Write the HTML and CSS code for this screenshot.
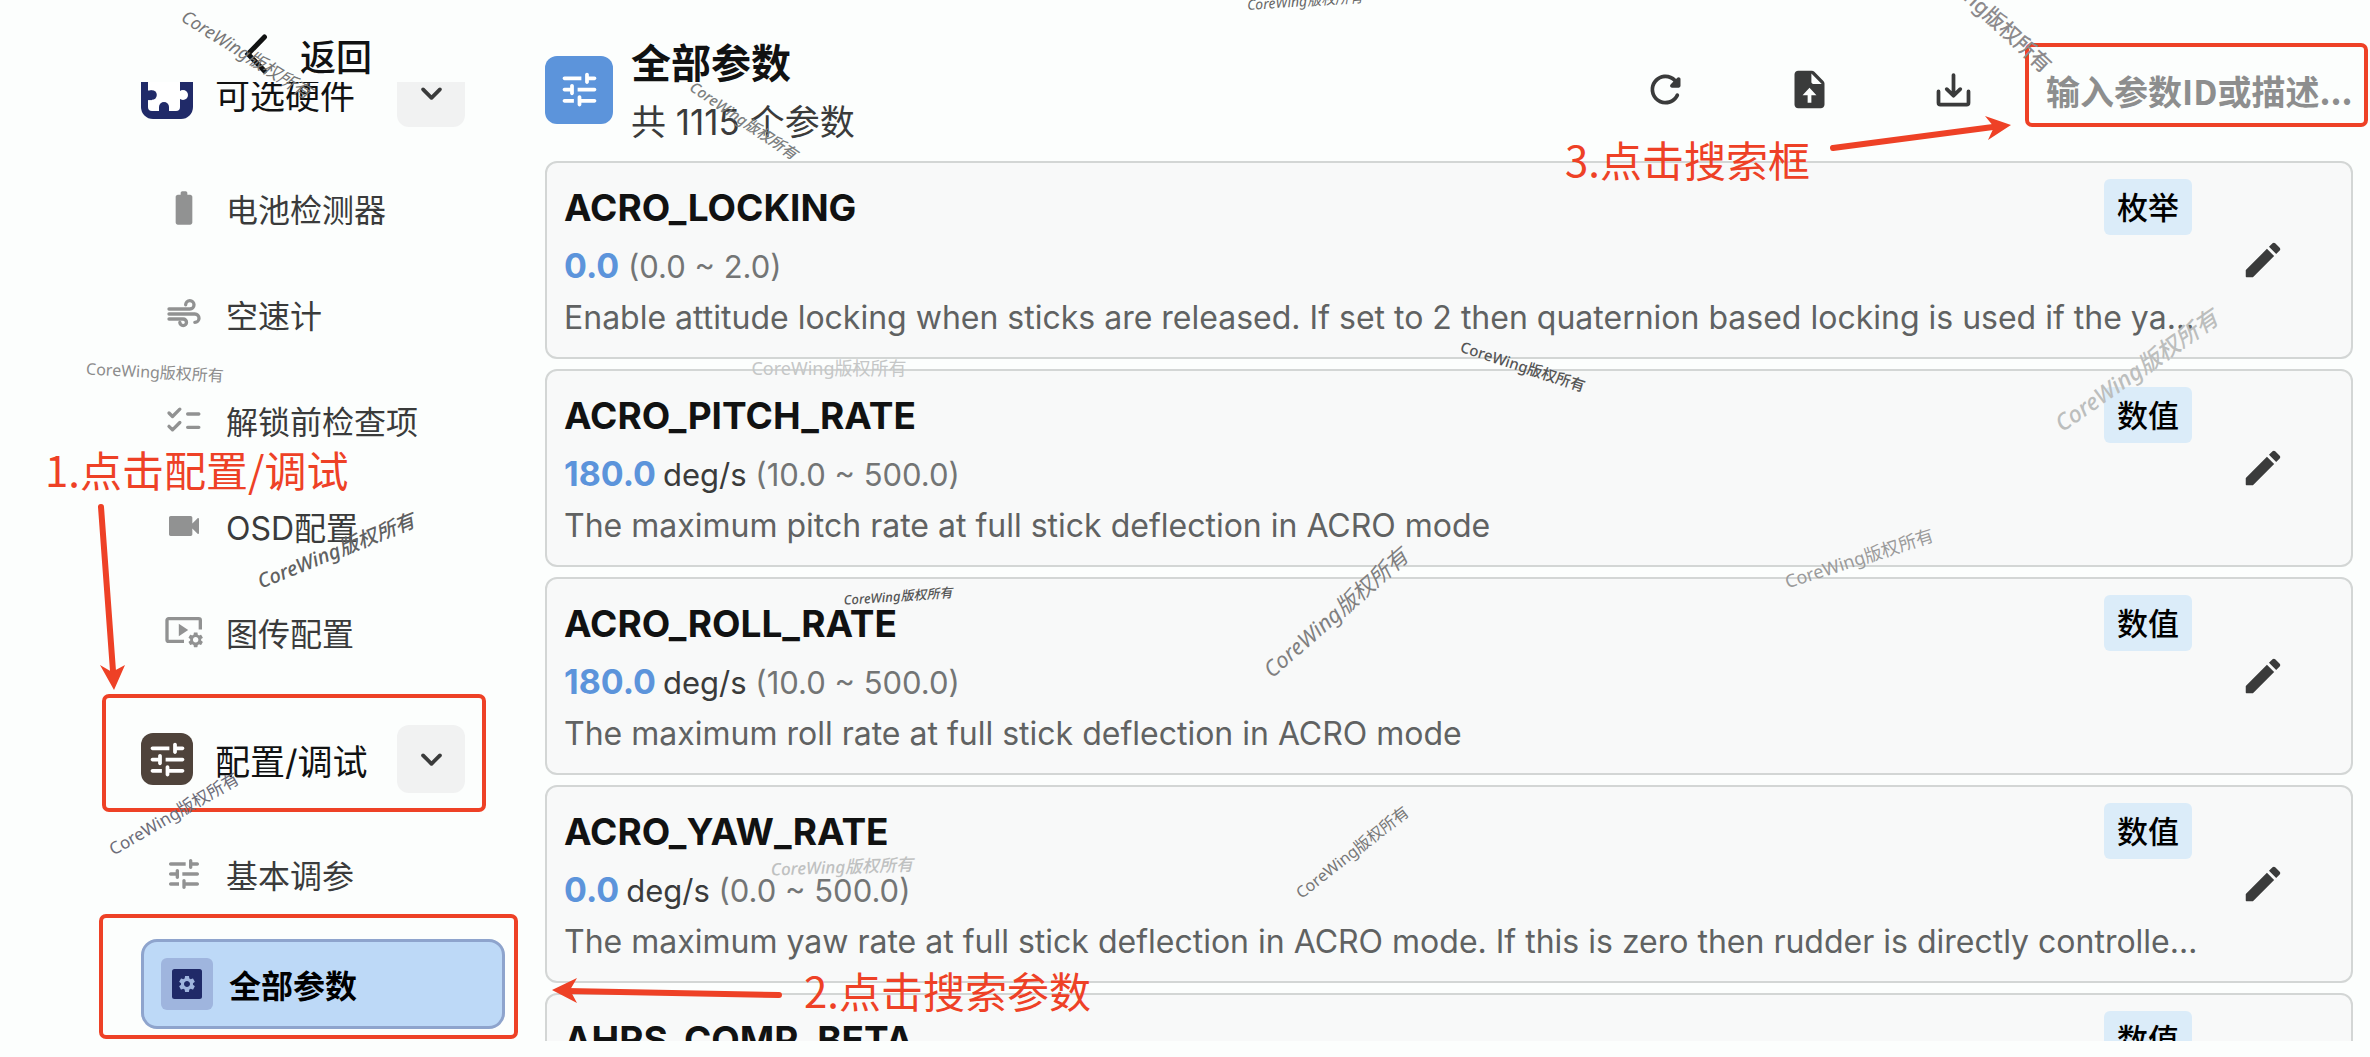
FILE: index.html
```html
<!DOCTYPE html>
<html lang="zh-CN">
<head>
<meta charset="utf-8">
<meta name="viewport" content="width=device-width, initial-scale=1">
<title>全部参数</title>
<link rel="stylesheet" href="styles.css">
</head>
<body>
<svg class="sprite" aria-hidden="true">
  <symbol id="i-tune" viewBox="0 0 24 24"><path d="M3 18c0 .55.45 1 1 1h5v-2H4c-.55 0-1 .45-1 1zM3 6c0 .55.45 1 1 1h9V5H4c-.55 0-1 .45-1 1zm10 14v-1h7c.55 0 1-.45 1-1s-.45-1-1-1h-7v-1c0-.55-.45-1-1-1s-1 .45-1 1v4c0 .55.45 1 1 1s1-.45 1-1zM7 10v1H4c-.55 0-1 .45-1 1s.45 1 1 1h3v1c0 .55.45 1 1 1s1-.45 1-1v-4c0-.55-.45-1-1-1s-1 .45-1 1zm14 2c0-.55-.45-1-1-1h-9v2h9c.55 0 1-.45 1-1zm-5-3c.55 0 1-.45 1-1V7h3c.55 0 1-.45 1-1s-.45-1-1-1h-3V4c0-.55-.45-1-1-1s-1 .45-1 1v4c0 .55.45 1 1 1z"/></symbol>
  <symbol id="i-gear" viewBox="0 0 24 24"><path d="M19.14 12.94c.04-.3.06-.61.06-.94 0-.32-.02-.64-.07-.94l2.03-1.58c.18-.14.23-.41.12-.61l-1.92-3.32c-.12-.22-.37-.29-.59-.22l-2.39.96c-.5-.38-1.03-.7-1.62-.94l-.36-2.54c-.04-.24-.24-.41-.48-.41h-3.84c-.24 0-.43.17-.47.41l-.36 2.54c-.59.24-1.13.57-1.62.94l-2.39-.96c-.22-.08-.47 0-.59.22L2.74 8.87c-.12.21-.08.47.12.61l2.03 1.58c-.05.3-.09.63-.09.94s.02.64.07.94l-2.03 1.58c-.18.14-.23.41-.12.61l1.92 3.32c.12.22.37.29.59.22l2.39-.96c.5.38 1.03.7 1.62.94l.36 2.54c.05.24.24.41.48.41h3.84c.24 0 .44-.17.47-.41l.36-2.54c.59-.24 1.13-.56 1.62-.94l2.39.96c.22.08.47 0 .59-.22l1.92-3.32c.12-.22.07-.47-.12-.61l-2.01-1.58zM12 15.6c-1.98 0-3.6-1.62-3.6-3.6s1.62-3.6 3.6-3.6 3.6 1.62 3.6 3.6-1.62 3.6-3.6 3.6z"/></symbol>
  <symbol id="i-edit" viewBox="0 0 24 24"><path d="M3 17.46v3.04c0 .28.22.5.5.5h3.04c.13 0 .26-.05.35-.15L17.81 9.94l-3.75-3.75L3.15 17.1c-.1.1-.15.22-.15.36zM20.71 7.04c.39-.39.39-1.02 0-1.41l-2.34-2.34c-.39-.39-1.02-.39-1.41 0l-1.83 1.83 3.75 3.75 1.83-1.83z"/></symbol>
  <symbol id="i-down" viewBox="0 0 24 24"><path class="line" d="M7.5 9.8l4.5 4.5 4.5-4.5"/></symbol>
</svg>

<div class="app">
  <aside class="sidebar">
    <button class="back" type="button">
      <svg class="back-icon" viewBox="0 0 24 40"><path d="M20.500 3L4 20l16.500 17"/></svg>
      返回
    </button>
    <nav class="nav">
      <div class="nav-list">
        <div class="group">
          <span class="tile tile-navy">
            <svg class="puzzle" viewBox="0 0 52 52"><rect class="w" x="7" y="12" width="32" height="32" rx="4"/><circle class="w" cx="23" cy="11" r="5"/><circle class="w" cx="42" cy="28" r="5"/><circle cx="11" cy="28" r="4.800"/><path d="M5 23.500h6v9.600H5z"/><circle cx="23" cy="40" r="5"/><path d="M18 40h10v6H18z"/></svg>
          </span>
          <span class="group-label">可选硬件</span>
          <button class="toggle" type="button" aria-label="收起可选硬件"><svg><use href="#i-down"/></svg></button>
        </div>
        <a class="item" href="#battery"><span class="item-icon"><svg viewBox="0 0 24 24"><path d="M15.670 4H14V3c0-.55-.45-1-1-1h-2c-.55 0-1 .45-1 1v1H8.330C7.600 4 7 4.600 7 5.330v15.330C7 21.400 7.600 22 8.340 22h7.320c.74 0 1.340-.6 1.340-1.330V5.330C17 4.600 16.400 4 15.670 4z"/></svg></span>电池检测器</a>
        <a class="item" href="#airspeed"><span class="item-icon"><svg viewBox="0 0 24 24"><path class="line" d="M3 9h12.500a2.500 2.500 0 1 0-2.500-2.500M3 12h15.500a2.500 2.500 0 0 1 0 5M3 15h8.500a2 2 0 1 1-2 2"/></svg></span>空速计</a>
        <a class="item" href="#prearm"><span class="item-icon"><svg viewBox="0 0 24 24"><path class="line" d="M3 7.800l2.100 2.100 4.400-4.400M3 15.800l2.100 2.100 4.400-4.400M14.200 8.400h6.700M14.200 16.400h6.700"/></svg></span>解锁前检查项</a>
        <a class="item" href="#osd"><span class="item-icon"><svg viewBox="0 0 24 24"><path d="M17 10.500V7c0-.55-.45-1-1-1H4c-.55 0-1 .45-1 1v10c0 .55.45 1 1 1h12c.55 0 1-.45 1-1v-3.500l3.150 3.150c.31.31.85.09.85-.36V7.700c0-.44-.54-.67-.85-.35L17 10.500z"/></svg></span>OSD配置</a>
        <a class="item" href="#video"><span class="item-icon"><svg viewBox="0 0 24 24"><path class="line butt" d="M12 17.600H2.800a1 1 0 0 1-1-1V5a1 1 0 0 1 1-1h18a1 1 0 0 1 1 1v5.500"/><path d="M8.900 7v7.600l5.600-3.800z"/><use href="#i-gear" x="13.500" y="11.200" width="11" height="11"/></svg></span>图传配置</a>

        <div class="group group-tuning">
          <span class="frame frame-group"></span>
          <span class="tile tile-brown"><svg><use href="#i-tune"/></svg></span>
          <span class="group-label">配置/调试</span>
          <button class="toggle" type="button" aria-label="收起配置/调试"><svg><use href="#i-down"/></svg></button>
        </div>
        <a class="item" href="#basic"><span class="item-icon"><svg><use href="#i-tune"/></svg></span>基本调参</a>
        <a class="item item-active" href="#all" aria-current="page"><span class="frame frame-item"></span><span class="item-icon"><svg viewBox="0 0 24 24"><rect x="3" y="3" width="18" height="18" rx="1.500"/><use class="cut" href="#i-gear" x="6" y="6" width="12" height="12"/></svg></span>全部参数</a>
      </div>
    </nav>
  </aside>

  <main class="main">
    <header class="header">
      <span class="tile tile-blue"><svg><use href="#i-tune"/></svg></span>
      <div class="heading">
        <h1>全部参数</h1>
        <p>共 1115 个参数</p>
      </div>
      <button class="tool" type="button" aria-label="刷新"><svg viewBox="0 0 24 24"><path d="M17.650 6.350c-1.630-1.630-3.940-2.570-6.480-2.310-3.670.37-6.690 3.350-7.100 7.020C3.520 15.910 7.270 20 12 20c3.190 0 5.930-1.870 7.210-4.560.32-.67-.16-1.440-.9-1.440-.37 0-.72.2-.88.53-1.130 2.430-3.840 3.970-6.800 3.310-2.220-.49-4.010-2.300-4.480-4.520C5.310 9.440 8.260 6 12 6c1.660 0 3.140.69 4.220 1.780l-1.510 1.510c-.63.63-.19 1.710.7 1.710H19c.55 0 1-.45 1-1V6.410c0-.89-1.080-1.340-1.710-.71l-.64.65z"/></svg></button>
      <button class="tool" type="button" aria-label="导入参数"><svg viewBox="0 0 24 24"><path fill-rule="evenodd" d="M14.590 2.590c-.38-.38-.89-.59-1.420-.59H6c-1.100 0-2 .9-2 2v16c0 1.100.89 2 1.990 2H18c1.100 0 2-.9 2-2V8.830c0-.53-.21-1.040-.59-1.410zM13 3.500L18.500 9H14c-.55 0-1-.45-1-1zM12 11l-3.700 4H11v4h2v-4h2.700z"/></svg></button>
      <button class="tool" type="button" aria-label="导出参数"><svg viewBox="0 0 24 24"><path class="line" d="M4 13v6a1 1 0 0 0 1 1h14a1 1 0 0 0 1-1v-6M12 4.300v10.700M8.400 11.800L12 15.300l3.600-3.500"/></svg></button>
      <label class="search"><input type="text" aria-label="搜索参数" placeholder="输入参数ID或描述..."><span class="frame frame-search"></span></label>
    </header>

    <div class="cards">
      <article class="card">
        <div class="card-body">
          <div class="card-top"><h2>ACRO_LOCKING</h2><span class="tag">枚举</span></div>
          <p class="value"><b>0.0</b> <span class="range">(0.0 ~ 2.0)</span></p>
          <p class="desc">Enable attitude locking when sticks are released. If set to 2 then quaternion based locking is used if the ya…</p>
        </div>
        <button class="edit" type="button" aria-label="编辑 ACRO_LOCKING"><svg><use href="#i-edit"/></svg></button>
      </article>
      <article class="card">
        <div class="card-body">
          <div class="card-top"><h2>ACRO_PITCH_RATE</h2><span class="tag">数值</span></div>
          <p class="value"><b>180.0</b><span class="unit">deg/s</span> <span class="range">(10.0 ~ 500.0)</span></p>
          <p class="desc">The maximum pitch rate at full stick deflection in ACRO mode</p>
        </div>
        <button class="edit" type="button" aria-label="编辑 ACRO_PITCH_RATE"><svg><use href="#i-edit"/></svg></button>
      </article>
      <article class="card">
        <div class="card-body">
          <div class="card-top"><h2>ACRO_ROLL_RATE</h2><span class="tag">数值</span></div>
          <p class="value"><b>180.0</b><span class="unit">deg/s</span> <span class="range">(10.0 ~ 500.0)</span></p>
          <p class="desc">The maximum roll rate at full stick deflection in ACRO mode</p>
        </div>
        <button class="edit" type="button" aria-label="编辑 ACRO_ROLL_RATE"><svg><use href="#i-edit"/></svg></button>
      </article>
      <article class="card">
        <div class="card-body">
          <div class="card-top"><h2>ACRO_YAW_RATE</h2><span class="tag">数值</span></div>
          <p class="value"><b>0.0</b><span class="unit">deg/s</span> <span class="range">(0.0 ~ 500.0)</span></p>
          <p class="desc">The maximum yaw rate at full stick deflection in ACRO mode. If this is zero then rudder is directly controlle…</p>
        </div>
        <button class="edit" type="button" aria-label="编辑 ACRO_YAW_RATE"><svg><use href="#i-edit"/></svg></button>
      </article>
      <article class="card">
        <div class="card-body">
          <div class="card-top"><h2>AHRS_COMP_BETA</h2><span class="tag">数值</span></div>
        </div>
        <button class="edit" type="button" aria-label="编辑 AHRS_COMP_BETA"><svg><use href="#i-edit"/></svg></button>
      </article>
    </div>
  </main>
</div>

<div class="overlay">
  <svg class="arrows" aria-hidden="true">
    <path class="shaft" d="M101 507l12 164"/><path d="M114 690l-14-25 12 7 13-7z"/>
    <path class="shaft" d="M779 995l-212-4"/><path d="M552 990l25-12-7 12 7 13z"/>
    <path class="shaft" d="M1833 148l160-21"/><path d="M2011 125l-26-9 9 11-6 13z"/>
  </svg>
  <p class="note note-1">1.点击配置/调试</p>
  <p class="note note-2">2.点击搜索参数</p>
  <p class="note note-3">3.点击搜索框</p>

  <span class="mark m1">CoreWing版权所有</span>
  <span class="mark m2">CoreWing版权所有</span>
  <span class="mark m3">CoreWing版权所有</span>
  <span class="mark m4">CoreWing版权所有</span>
  <span class="mark m5">CoreWing版权所有</span>
  <span class="mark m6">CoreWing版权所有</span>
  <span class="mark m7">CoreWing版权所有</span>
  <span class="mark m8">CoreWing版权所有</span>
  <span class="mark m9">CoreWing版权所有</span>
  <span class="mark m10">CoreWing版权所有</span>
  <span class="mark m11">CoreWing版权所有</span>
  <span class="mark m12">CoreWing版权所有</span>
  <span class="mark m13">CoreWing版权所有</span>
  <span class="mark m14">CoreWing版权所有</span>
  <span class="mark m15">CoreWing版权所有</span>
</div>
</body>
</html>
```
FILE: styles.css
```css
:root {
  --ink: #111212;
  --ink-soft: #3a3b3b;
  --muted: #606262;
  --icon-muted: #919292;
  --page: #fcfefd;
  --card: #f8f9f9;
  --line: #d3d6d5;
  --blue: #5c94db;
  --red: #ee4126;
}

* { box-sizing: border-box; }

body {
  margin: 0;
  background: var(--page);
  color: var(--ink);
  font-family: Inter, "Noto Sans CJK SC", sans-serif;
}

h1, h2, p { margin: 0; }
button, input { font: inherit; color: inherit; border: 0; background: none; padding: 0; }
a { color: inherit; text-decoration: none; }
svg { display: block; fill: currentColor; }
.sprite { position: absolute; width: 0; height: 0; }
.line { fill: none; stroke: currentColor; stroke-width: 2; stroke-linecap: round; stroke-linejoin: round; }
.butt { stroke-linecap: butt; }

.app {
  display: flex;
  height: 100vh;
  padding-bottom: 16px;
  overflow: hidden;
}

/* Sidebar */
.sidebar {
  flex: none;
  display: flex;
  flex-direction: column;
  width: 545px;
}
.back {
  flex: none;
  display: flex;
  align-items: center;
  gap: 32px;
  height: 82px;
  padding: 34px 0 0 244px;
  font-size: 36px;
  font-weight: 500;
  line-height: 48px;
}
.back-icon { width: 24px; height: 40px; margin-bottom: 8px; fill: none; stroke: currentColor; stroke-width: 5; stroke-linecap: round; stroke-linejoin: miter; }
.nav { flex: 1; overflow: hidden; }
.nav-list {
  display: flex;
  flex-direction: column;
  gap: 16px;
  margin-top: -23px;
  padding: 0 40px 0 141px;
}
.group {
  position: relative;
  display: flex;
  align-items: center;
  height: 68px;
  margin-bottom: 20px;
  padding-right: 40px;
  font-size: 35px;
}
.group-tuning { margin-top: 32px; }
.group-label { flex: 1; margin-left: 22px; }
.tile {
  flex: none;
  display: grid;
  place-items: center;
  width: 52px;
  height: 52px;
  border-radius: 12px;
  color: #fff;
}
.tile svg { width: 45px; height: 45px; }
.tile-navy { background: #202a68; }
.tile-navy .puzzle { width: 52px; height: 52px; fill: #202a68; }
.puzzle .w { fill: #fff; }
.tile-brown { background: #4f433b; }
.tile-blue { width: 68px; height: 68px; background: var(--blue); }
.toggle {
  display: grid;
  place-items: center;
  width: 68px;
  height: 68px;
  border-radius: 12px;
  background: #f1f2f2;
  color: var(--ink-soft);
}
.toggle svg { width: 45px; height: 45px; }
.item {
  position: relative;
  display: flex;
  align-items: center;
  gap: 16px;
  height: 90px;
  padding-left: 17px;
  border-radius: 16px;
  color: var(--ink-soft);
  font-size: 32px;
}
.item-icon {
  display: grid;
  place-items: center;
  width: 52px;
  height: 52px;
  border-radius: 6px;
  color: var(--icon-muted);
}
.item-icon svg { width: 40px; height: 40px; overflow: visible; }
.item-active {
  margin-top: 4px;
  border: 3px solid #8ea4cd;
  background: #bdd9f7;
  color: #000;
  font-weight: 700;
}
.item-active .item-icon { background: #9fb5de; color: #202a68; }
.cut { fill: #9fb5de; }

/* Main panel */
.main {
  flex: 1;
  min-width: 0;
  display: flex;
  flex-direction: column;
}
.header {
  flex: none;
  display: flex;
  align-items: center;
  padding: 27px 2px 9px 0;
}
.heading { flex: 1; margin-left: 18px; padding-top: 9px; }
.heading h1 { font-size: 40px; font-weight: 700; line-height: 56px; }
.heading p { color: var(--ink-soft); font-size: 35px; line-height: 60px; }
.tool { display: grid; place-items: center; width: 144px; height: 68px; color: var(--ink-soft); }
.tool svg { width: 45px; height: 45px; }
.search { position: relative; width: 343px; height: 84px; margin-top: -10px; }
.search input {
  width: 100%;
  height: 100%;
  padding: 12px 0 0 21px;
  font-family: "Noto Sans CJK SC", sans-serif;
  font-size: 34px;
  font-weight: 700;
  outline: 0;
}
.search input::placeholder { color: #8d8e8e; opacity: 1; }

.cards {
  flex: 1;
  display: flex;
  flex-direction: column;
  gap: 10px;
  min-height: 0;
  padding-right: 17px;
  overflow: hidden;
}
.card {
  flex: none;
  display: flex;
  align-items: center;
  height: 198px;
  padding: 16px 37px 0 17px;
  border: 2px solid var(--line);
  border-radius: 12px;
  background: var(--card);
}
.card-body { flex: 1; align-self: flex-start; min-width: 0; }
.card-top { display: flex; justify-content: space-between; height: 56px; }
.card h2 { font-size: 37px; font-weight: 700; line-height: 58px; }
.tag {
  padding: 0 13px;
  border-radius: 6px;
  background: #dbecf9;
  color: #000;
  font-size: 31px;
  font-weight: 500;
  line-height: 58px;
}
.value { font-size: 31px; line-height: 62px; }
.value b { color: var(--blue); font-size: 34px; }
.unit { margin-left: 7px; color: var(--ink-soft); }
.range { color: #737575; }
.desc {
  margin-right: -18px;
  overflow: hidden;
  color: var(--muted);
  font-size: 32px;
  line-height: 40px;
  white-space: nowrap;
  text-overflow: ellipsis;
}
.edit { display: grid; place-items: center; width: 102px; height: 102px; margin: 0 0 16px 20px; color: var(--ink-soft); }
.edit svg { width: 46px; height: 46px; }

/* Tutorial frames, arrows and notes */
.frame { position: absolute; border: 4px solid var(--red); border-radius: 7px; pointer-events: none; }
.frame-group { inset: -31px 19px -19px -39px; }
.frame-item { inset: -28px -16px -13px -45px; }
.frame-search { inset: 0; }

.overlay { position: absolute; inset: 0; overflow: hidden; pointer-events: none; }
.arrows { width: 100%; height: 100%; fill: var(--red); }
.shaft { stroke: var(--red); stroke-width: 6; stroke-linecap: round; }
.note { position: absolute; color: var(--red); font-family: "Noto Sans CJK SC", sans-serif; font-size: 42px; line-height: 60px; white-space: nowrap; }
.note-1 { left: 45px; top: 439px; }
.note-2 { left: 804px; top: 960px; }
.note-3 { left: 1565px; top: 129px; }

/* Watermarks: placed by centre point, then turned */
.mark {
  position: absolute;
  font-family: "Noto Sans", "Noto Sans CJK SC", sans-serif;
  font-size: 18px;
  line-height: 24px;
  white-space: nowrap;
  transform: translate(-50%, -50%) rotate(var(--turn));
}
.m1 { left: 247px; top: 54px; --turn: 32deg; color: #777; font-style: italic; }
.m2 { left: 1305px; top: 1px; --turn: -4deg; color: #666; font-size: 14px; font-style: italic; }
.m3 { left: 744px; top: 120px; --turn: 34deg; color: #7c8080; font-size: 15px; font-style: italic; font-weight: 500; }
.m4 { left: 1982px; top: 6px; --turn: 43deg; color: #8c8a8c; font-size: 21px; font-weight: 500; }
.m5 { left: 155px; top: 372px; --turn: 3deg; color: #8c8c8c; font-size: 16px; }
.m6 { left: 336px; top: 551px; --turn: -22deg; color: #606161; font-size: 20px; font-style: italic; font-weight: 500; }
.m7 { left: 174px; top: 814px; --turn: -30deg; color: #6c6c78; font-size: 17px; }
.m8 { left: 829px; top: 368px; --turn: 0deg; color: #c5c7c7; }
.m9 { left: 898px; top: 596px; --turn: -4deg; color: #555; font-size: 13px; font-style: italic; font-weight: 500; }
.m10 { left: 1523px; top: 366px; --turn: 18deg; color: #555; font-size: 15px; font-weight: 500; }
.m11 { left: 1335px; top: 612px; --turn: -41deg; color: #807f80; font-size: 22px; font-style: italic; }
.m12 { left: 1859px; top: 558px; --turn: -18deg; color: #9b9b9b; }
.m13 { left: 2136px; top: 370px; --turn: -35deg; color: #bcbebd; font-size: 23px; font-style: italic; font-weight: 500; }
.m14 { left: 842px; top: 867px; --turn: -2deg; color: #bfc1c1; font-size: 17px; font-style: italic; font-weight: 500; }
.m15 { left: 1352px; top: 852px; --turn: -38deg; color: #777; font-size: 16px; }
```
